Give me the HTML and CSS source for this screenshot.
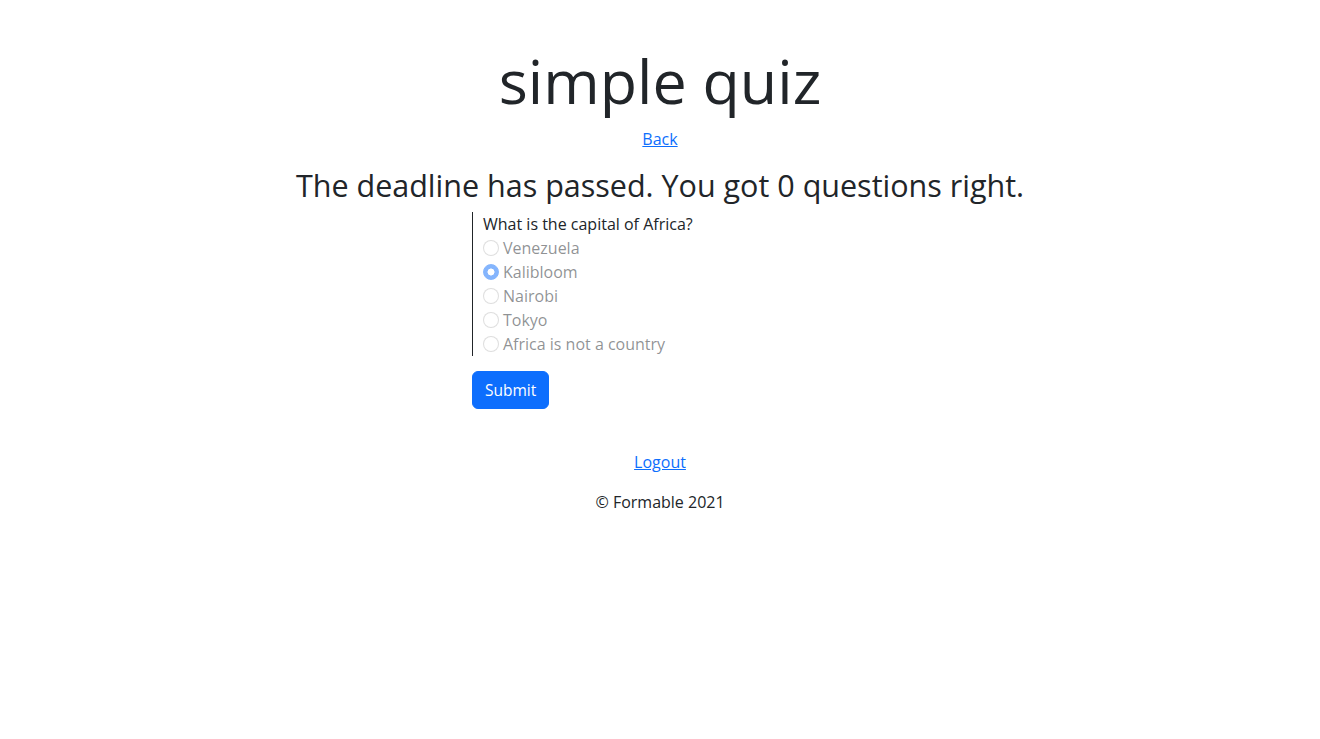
FILE: index.html
```html
<!DOCTYPE html>
<html lang="en">
<head>
<meta charset="utf-8">
<title>simple quiz</title>
<link rel="stylesheet" href="styles.css">
</head>
<body>
<main class="page">
  <h1 class="title">simple quiz</h1>
  <a class="back" href="#">Back</a>
  <h2 class="result">The deadline has passed. You got 0 questions right.</h2>
  <form class="quiz">
    <fieldset class="question">
      <div class="q-text">What is the capital of Africa?</div>
      <label class="option"><input type="radio" name="q1" disabled><span>Venezuela</span></label>
      <label class="option"><input type="radio" name="q1" checked disabled><span>Kalibloom</span></label>
      <label class="option"><input type="radio" name="q1" disabled><span>Nairobi</span></label>
      <label class="option"><input type="radio" name="q1" disabled><span>Tokyo</span></label>
      <label class="option"><input type="radio" name="q1" disabled><span>Africa is not a country</span></label>
    </fieldset>
    <button class="submit" type="button">Submit</button>
  </form>
  <footer class="footer">
    <a class="logout" href="#">Logout</a>
    <p class="copy">© Formable 2021</p>
  </footer>
</main>
</body>
</html>
```
FILE: styles.css
```css
* { box-sizing: border-box; }
body {
  margin: 0;
  font-family: "Open Sans", "Noto Sans", sans-serif;
  font-size: 16px;
  line-height: 1.5;
  color: #212529;
  background: #fff;
}
.page {
  display: flex;
  flex-direction: column;
  align-items: center;
  padding-top: 35px;
}
.title {
  margin: 0;
  font-size: 61px;
  font-weight: 400;
  line-height: 92px;
}
.back, .logout {
  color: #0d6efd;
  text-decoration: underline;
}
.result {
  margin: 15px 0 0;
  font-size: 30.5px;
  font-weight: 400;
  line-height: 38px;
}
.quiz {
  width: 376px;
  display: flex;
  flex-direction: column;
  align-items: flex-start;
  margin-top: 8px;
}
.question {
  margin: 0;
  padding: 0 0 0 10px;
  border: 0;
  border-left: 1px solid #212529;
  display: flex;
  flex-direction: column;
  align-items: flex-start;
}
.q-text { line-height: 24px; }
.option {
  display: flex;
  align-items: center;
  gap: 4px;
  line-height: 24px;
  color: rgba(33, 37, 41, 0.5);
}
.option input {
  appearance: none;
  margin: 0;
  width: 16px;
  height: 16px;
  border-radius: 50%;
  border: 1px solid rgba(0, 0, 0, 0.25);
  opacity: 0.5;
  background: #fff;
}
.option input:checked {
  border-color: #0d6efd;
  background: radial-gradient(circle, #fff 0 3.2px, #0d6efd 3.8px);
}
.submit {
  margin-top: 15px;
  font: inherit;
  font-size: 15.5px;
  color: #fff;
  background: #0d6efd;
  border: 1px solid #0d6efd;
  border-radius: 6px;
  padding: 6px 12px;
  line-height: 24px;
}
.footer {
  margin-top: 41px;
  display: flex;
  flex-direction: column;
  align-items: center;
}
.copy { margin: 16px 0 0; }
```
